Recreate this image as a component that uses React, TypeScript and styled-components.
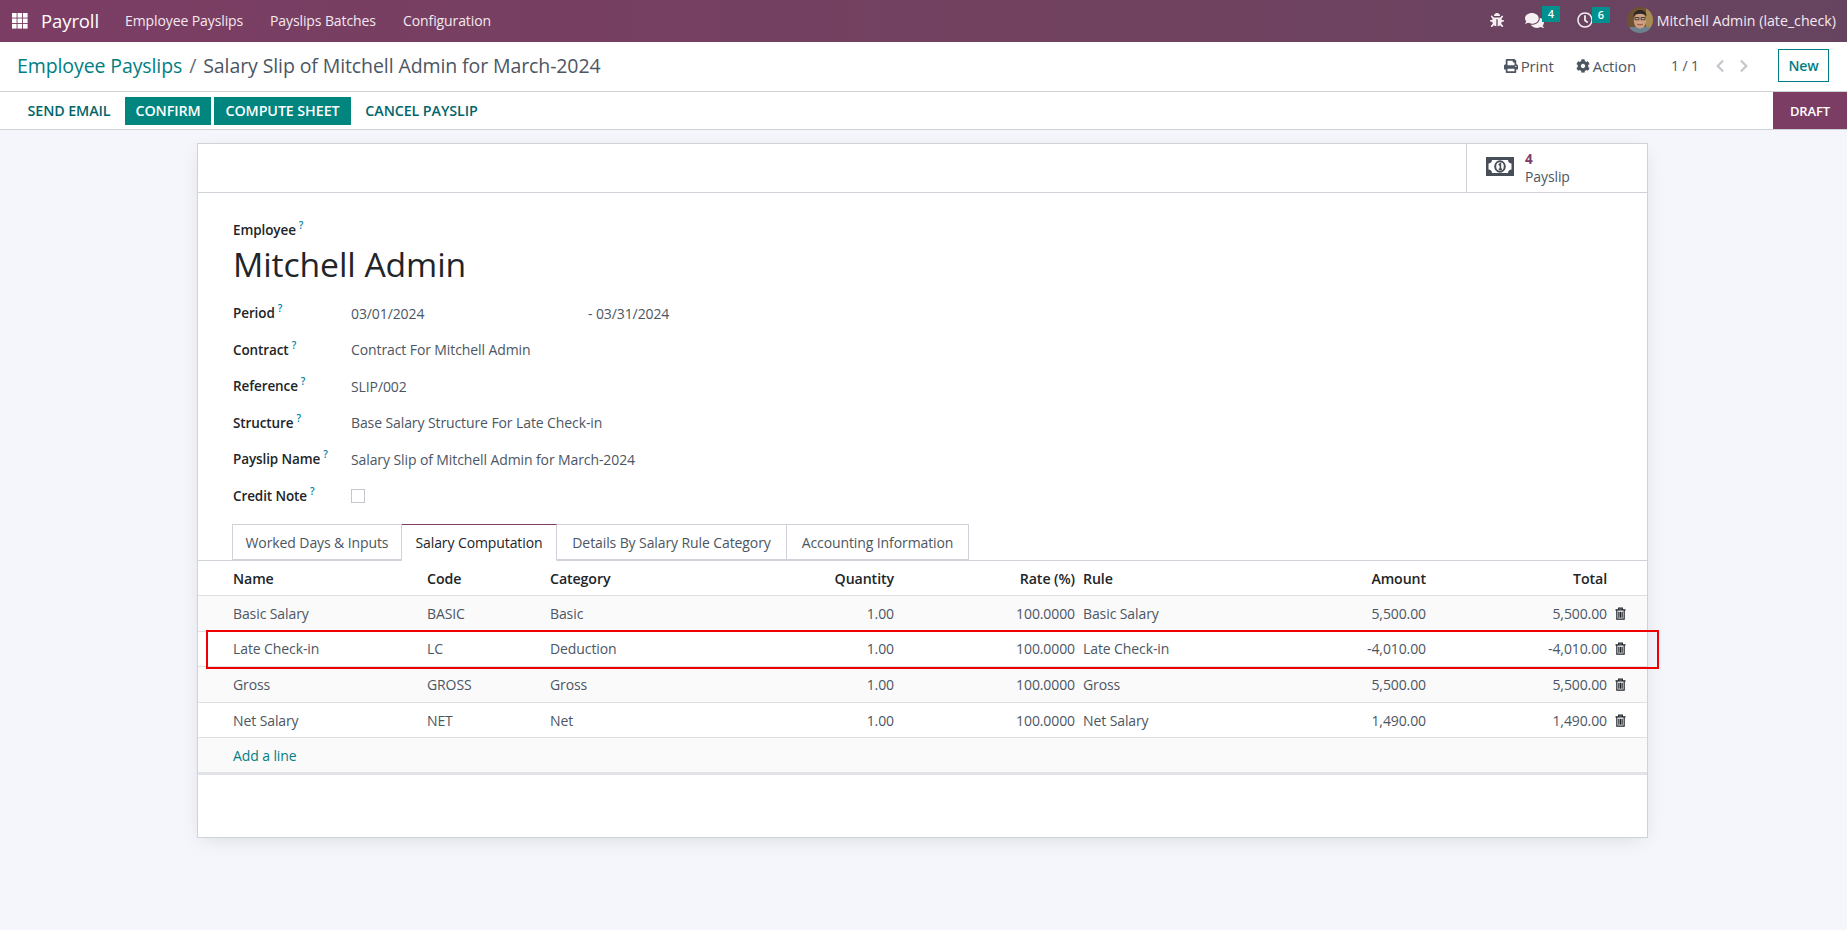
import React from "react";
import styled, { createGlobalStyle } from "styled-components";
import { FaBug, FaComments, FaRegClock, FaPrint, FaCog, FaChevronLeft, FaChevronRight } from "react-icons/fa";

const Global = createGlobalStyle`
  html, body { margin: 0; padding: 0; }
  body {
    background: #f5f6fb;
    font-family: "Open Sans", "Noto Sans", sans-serif;
    font-size: 14px;
    color: #4c5663;
    letter-spacing: -0.1px;
  }
  * { box-sizing: border-box; }
`;

const Page = styled.div`
  width: 1847px;
  height: 930px;
  overflow: hidden;
  display: flex;
  flex-direction: column;
`;

const NavBar = styled.header`
  height: 42px;
  flex: none;
  display: flex;
  align-items: center;
  padding-bottom: 2px;
  background: linear-gradient(90deg, #7c3d64 0%, #714260 60%, #664460 100%);
  color: #fff;
`;
const AppsGrid = styled.svg`
  width: 16px;
  height: 16px;
  margin-left: 12px;
  margin-top: 2px;
  flex: none;
`;
const Brand = styled.span`
  font-size: 18.5px;
  margin-left: 13px;
  width: 84px;
`;
const NavLink = styled.span<{ $w: number }>`
  font-size: 14px;
  color: #f3e9ef;
  width: ${(p) => p.$w}px;
  white-space: nowrap;
`;
const NavRight = styled.div`
  margin-left: auto;
  display: flex;
  align-items: center;
  padding-right: 11px;
`;
const NavIcon = styled.span<{ $gap: number }>`
  position: relative;
  display: inline-flex;
  margin-right: ${(p) => p.$gap}px;
  font-size: 16px;
  color: #f6f0f4;
`;
const Badge = styled.span<{ $right: number }>`
  position: absolute;
  top: -5px;
  right: ${(p) => p.$right}px;
  width: 18px;
  height: 16px;
  background: #00918e;
  color: #fff;
  font-size: 11px;
  font-weight: 600;
  line-height: 15px;
  text-align: center;
`;
const Avatar = styled.svg`
  width: 26px;
  height: 26px;
  margin-right: 4px;
  flex: none;
`;
const UserName = styled.span`
  font-size: 14.2px;
  letter-spacing: 0;
  color: #f3e9ef;
  white-space: nowrap;
`;

const ControlPanel = styled.div`
  height: 50px;
  flex: none;
  display: flex;
  align-items: center;
  background: #fff;
  border-bottom: 1px solid #ced1d6;
  padding: 0 18px 2px 17px;
`;
const Crumbs = styled.div`
  font-size: 19.5px;
  color: #4c5663;
  white-space: nowrap;
`;
const CrumbLink = styled.span`
  color: #017e84;
`;
const CrumbSep = styled.span`
  margin: 0 7px;
  color: #666f7a;
`;
const Tools = styled.div`
  margin-left: auto;
  display: flex;
  align-items: center;
`;
const ToolButton = styled.span<{ $gap: number }>`
  display: inline-flex;
  align-items: center;
  gap: 3px;
  font-size: 15px;
  font-weight: 500;
  color: #4c5663;
  margin-right: ${(p) => p.$gap}px;
  svg { font-size: 14px; }
`;
const Pager = styled.span`
  font-size: 14px;
  color: #4c5663;
  margin-right: 14px;
`;
const Chev = styled.span<{ $gap: number }>`
  display: inline-flex;
  font-size: 14px;
  color: #c4c8cd;
  margin-right: ${(p) => p.$gap}px;
`;
const NewButton = styled.span`
  width: 51px;
  height: 33px;
  display: inline-flex;
  align-items: center;
  justify-content: center;
  border: 1px solid #017e84;
  color: #017e84;
  font-size: 14px;
  font-weight: 600;
`;

const StatusBar = styled.div`
  height: 38px;
  flex: none;
  display: flex;
  align-items: center;
  background: #fff;
  border-bottom: 1px solid #ced1d6;
  padding-left: 16px;
`;
const ActionButton = styled.span<{ $primary?: boolean; $w: number }>`
  width: ${(p) => p.$w}px;
  height: 28px;
  margin-right: 3px;
  display: inline-flex;
  align-items: center;
  justify-content: center;
  padding-bottom: 1px;
  font-size: 14.3px;
  font-weight: 600;
  white-space: nowrap;
  background: ${(p) => (p.$primary ? "#00857f" : "transparent")};
  color: ${(p) => (p.$primary ? "#fff" : "#01666b")};
`;
const DraftTag = styled.span`
  margin-left: auto;
  width: 74px;
  height: 37px;
  display: flex;
  align-items: center;
  justify-content: center;
  background: #7c3d64;
  color: #fff;
  font-size: 13px;
  font-weight: 600;
`;

const Content = styled.main`
  flex: 1;
  padding: 13px 0 0 197px;
  display: flex;
`;
const Sheet = styled.section`
  width: 1451px;
  height: 695px;
  background: #fff;
  border: 1px solid #cfd2d8;
  box-shadow: 0 5px 20px -5px rgba(0, 0, 0, 0.12);
  display: flex;
  flex-direction: column;
`;
const ButtonBox = styled.div`
  height: 49px;
  flex: none;
  display: flex;
  justify-content: flex-end;
  border-bottom: 1px solid #cfd2d8;
`;
const StatButton = styled.div`
  width: 181px;
  display: flex;
  align-items: center;
  border-left: 1px solid #cfd2d8;
  padding-left: 19px;
  gap: 11px;
`;
const MoneyIcon = styled.svg`
  width: 28px;
  height: 19px;
  flex: none;
  margin-top: -3px;
`;
const StatText = styled.div`
  display: flex;
  flex-direction: column;
  line-height: 17px;
  font-size: 14px;
`;
const StatValue = styled.span`
  color: #7c3d64;
  font-weight: 700;
  font-size: 13.5px;
`;

const Form = styled.div`
  padding: 27px 35px 0;
`;
const FieldLabel = styled.label`
  font-weight: 600;
  font-size: 13.5px;
  color: #212529;
  white-space: nowrap;
`;
const Help = styled.sup`
  color: #0180a5;
  font-size: 10px;
  font-weight: 600;
  margin-left: 3px;
  line-height: 0;
  vertical-align: 6px;
`;
const Title = styled.h1`
  margin: 3px 0 9px;
  font-size: 33.7px;
  font-weight: 400;
  line-height: 44px;
  color: #212529;
`;
const FieldRow = styled.div`
  height: 36.5px;
  display: grid;
  grid-template-columns: 118px 1fr;
  align-items: center;
`;
const ValueWrap = styled.div`
  display: flex;
`;
const DateValue = styled.span`
  width: 237px;
`;
const CheckBox = styled.span`
  width: 14px;
  height: 14px;
  background: #fff;
  border: 1px solid #c3c7cc;
  display: block;
`;

const Tabs = styled.div`
  display: flex;
  padding-left: 34px;
  margin-top: 10px;
  height: 36px;
  flex: none;
  position: relative;
  z-index: 1;
`;
const Tab = styled.div<{ $active?: boolean; $w: number }>`
  width: ${(p) => p.$w}px;
  height: ${(p) => (p.$active ? 37 : 36)}px;
  display: flex;
  align-items: center;
  justify-content: center;
  background: #fff;
  white-space: nowrap;
  color: ${(p) => (p.$active ? "#212529" : "#4c5663")};
  border: 1px solid #cfd2d8;
  border-top-color: ${(p) => (p.$active ? "#7c3d64" : "#cfd2d8")};
  border-bottom-color: ${(p) => (p.$active ? "#fff" : "#cfd2d8")};
  & + & { border-left-width: 0; }
`;

const Table = styled.table`
  width: 1449px;
  table-layout: fixed;
  border-collapse: collapse;
  border-bottom: 3px solid #e1e3e8;
`;
const HeadRow = styled.tr`
  height: 35px;
  border-top: 1px solid #cfd2d8;
`;
const Th = styled.th<{ $right?: boolean; $first?: boolean }>`
  padding: 0 4px 0 ${(p) => (p.$first ? 35 : 4)}px;
  text-align: ${(p) => (p.$right ? "right" : "left")};
  font-weight: 600;
  color: #212529;
  font-size: 14.2px;
  border-bottom: 1px solid #dee0e4;
`;
const Row = styled.tr<{ $alt?: boolean }>`
  height: 35.6px;
  background: ${(p) => (p.$alt ? "#fafafb" : "#fff")};
  border-bottom: 1px solid #dee0e4;
`;
const Td = styled.td<{ $right?: boolean; $first?: boolean }>`
  padding: 0 4px 0 ${(p) => (p.$first ? 35 : 4)}px;
  text-align: ${(p) => (p.$right ? "right" : "left")};
  white-space: nowrap;
  position: relative;
`;
const AddLink = styled.span`
  color: #017e84;
`;
const TrashIcon = styled.svg`
  display: block;
  width: 11px;
  height: 13px;
  margin-left: 0;
`;
const Highlight = styled.div`
  position: absolute;
  left: 206px;
  top: 630px;
  width: 1453px;
  height: 39px;
  border: 2px solid #f00000;
  pointer-events: none;
`;

const Trash = () => (
  <TrashIcon viewBox="0 0 12 14" fill="none" stroke="#1f2429" strokeWidth="1.3">
    <path d="M.5 3h11M4 3V1.200h4V3M2 3v10.200h8V3" />
    <path d="M4.200 5v6.500M6 5v6.500M7.800 5v6.500" />
  </TrashIcon>
);

const Q = () => <Help>?</Help>;

const lines = [
  ["Basic Salary", "BASIC", "Basic", "Basic Salary", "5,500.00"],
  ["Late Check-in", "LC", "Deduction", "Late Check-in", "-4,010.00"],
  ["Gross", "GROSS", "Gross", "Gross", "5,500.00"],
  ["Net Salary", "NET", "Net", "Net Salary", "1,490.00"],
];

const fields = [
  ["Contract", "Contract For Mitchell Admin"],
  ["Reference", "SLIP/002"],
  ["Structure", "Base Salary Structure For Late Check-in"],
  ["Payslip Name", "Salary Slip of Mitchell Admin for March-2024"],
];

const colWidths = [225, 123, 174, 178, 181, 171, 180, 181, 36];

export default function App() {
  return (
    <Page>
      <Global />
      <NavBar>
        <AppsGrid viewBox="0 0 16 16" fill="#fff">
          {[0, 5.5, 11].map((y) =>
            [0, 5.5, 11].map((x) => <rect key={`${x}-${y}`} x={x} y={y} width="4.6" height="4.6" />)
          )}
        </AppsGrid>
        <Brand>Payroll</Brand>
        <NavLink $w={145}>Employee Payslips</NavLink>
        <NavLink $w={133}>Payslips Batches</NavLink>
        <NavLink $w={100}>Configuration</NavLink>
        <NavRight>
          <NavIcon $gap={21}><FaBug size={14} /></NavIcon>
          <NavIcon $gap={33}>
            <FaComments size={19} />
            <Badge $right={-16}>4</Badge>
          </NavIcon>
          <NavIcon $gap={34}>
            <FaRegClock size={16} />
            <Badge $right={-17}>6</Badge>
          </NavIcon>
          <Avatar viewBox="0 0 26 26">
            <defs>
              <clipPath id="av"><circle cx="13" cy="13" r="13" /></clipPath>
            </defs>
            <g clipPath="url(#av)">
              <rect width="26" height="26" fill="#6f5233" />
              <rect x="19" width="7" height="26" fill="#a98a52" />
              <rect y="20" width="26" height="6" fill="#6d8290" />
              <ellipse cx="13" cy="13.500" rx="6.200" ry="8" fill="#cf9f82" />
              <path d="M6.500 10c0-5 3-7 6.500-7s6.500 2 6.500 6l-2-1.500c-3-1-6-1-9 0z" fill="#2f2722" />
              <path d="M8 10.500h4v2.300H8zM14 10.500h4v2.300h-4z" fill="none" stroke="#2b2b2b" strokeWidth="0.8" />
              <path d="M10 17c1.800 1.200 4.200 1.200 6 0" stroke="#8c4d3a" strokeWidth="1" fill="none" />
            </g>
          </Avatar>
          <UserName>Mitchell Admin (late_check)</UserName>
        </NavRight>
      </NavBar>

      <ControlPanel>
        <Crumbs>
          <CrumbLink>Employee Payslips</CrumbLink>
          <CrumbSep>/</CrumbSep>
          Salary Slip of Mitchell Admin for March-2024
        </Crumbs>
        <Tools>
          <ToolButton $gap={22}><FaPrint />Print</ToolButton>
          <ToolButton $gap={35}><FaCog />Action</ToolButton>
          <Pager>1 / 1</Pager>
          <Chev $gap={10}><FaChevronLeft /></Chev>
          <Chev $gap={27}><FaChevronRight /></Chev>
          <NewButton>New</NewButton>
        </Tools>
      </ControlPanel>

      <StatusBar>
        <ActionButton $w={106}>SEND EMAIL</ActionButton>
        <ActionButton $primary $w={86}>CONFIRM</ActionButton>
        <ActionButton $primary $w={137}>COMPUTE SHEET</ActionButton>
        <ActionButton $w={135}>CANCEL PAYSLIP</ActionButton>
        <DraftTag>DRAFT</DraftTag>
      </StatusBar>

      <Content>
        <Sheet>
          <ButtonBox>
            <StatButton>
              <MoneyIcon viewBox="0 0 28 19">
                <path
                  fillRule="evenodd"
                  fill="#474e58"
                  d="M0 0h28v19H0zM6 3c0 2-1.500 3.500-3.500 3.500v6C4.500 12.500 6 14 6 16h16c0-2 1.500-3.500 3.500-3.500v-6C23.500 6.500 22 5 22 3z"
                />
                <ellipse cx="14" cy="9.500" rx="4.800" ry="5.200" fill="none" stroke="#474e58" strokeWidth="2" />
                <path d="M12.700 8 14.400 6.800v5.400M12.700 12.400h3.400" fill="none" stroke="#474e58" strokeWidth="1.600" />
              </MoneyIcon>
              <StatText>
                <StatValue>4</StatValue>
                <span>Payslip</span>
              </StatText>
            </StatButton>
          </ButtonBox>
          <Form>
            <FieldLabel>Employee<Q /></FieldLabel>
            <Title>Mitchell Admin</Title>
            <FieldRow>
              <FieldLabel>Period<Q /></FieldLabel>
              <ValueWrap>
                <DateValue>03/01/2024</DateValue>
                <span>- 03/31/2024</span>
              </ValueWrap>
            </FieldRow>
            {fields.map(([label, value]) => (
              <FieldRow key={label}>
                <FieldLabel>{label}<Q /></FieldLabel>
                <span>{value}</span>
              </FieldRow>
            ))}
            <FieldRow>
              <FieldLabel>Credit Note<Q /></FieldLabel>
              <CheckBox />
            </FieldRow>
          </Form>
          <Tabs>
            <Tab $w={170}>Worked Days &amp; Inputs</Tab>
            <Tab $active $w={155}>Salary Computation</Tab>
            <Tab $w={230}>Details By Salary Rule Category</Tab>
            <Tab $w={182}>Accounting Information</Tab>
          </Tabs>
          <Table>
            <colgroup>
              {colWidths.map((w, i) => <col key={i} style={{ width: w }} />)}
            </colgroup>
            <thead>
              <HeadRow>
                <Th $first>Name</Th>
                <Th>Code</Th>
                <Th>Category</Th>
                <Th $right>Quantity</Th>
                <Th $right>Rate (%)</Th>
                <Th>Rule</Th>
                <Th $right>Amount</Th>
                <Th $right>Total</Th>
                <Th />
              </HeadRow>
            </thead>
            <tbody>
              {lines.map(([name, code, cat, rule, amount], i) => (
                <Row key={name} $alt={i % 2 === 0}>
                  <Td $first>{name}</Td>
                  <Td>{code}</Td>
                  <Td>{cat}</Td>
                  <Td $right>1.00</Td>
                  <Td $right>100.0000</Td>
                  <Td>{rule}</Td>
                  <Td $right>{amount}</Td>
                  <Td $right>{amount}</Td>
                  <Td><Trash /></Td>
                </Row>
              ))}
              <Row $alt>
                <Td $first><AddLink>Add a line</AddLink></Td>
                <Td colSpan={8} />
              </Row>
            </tbody>
          </Table>
        </Sheet>
      </Content>
      <Highlight />
    </Page>
  );
}
